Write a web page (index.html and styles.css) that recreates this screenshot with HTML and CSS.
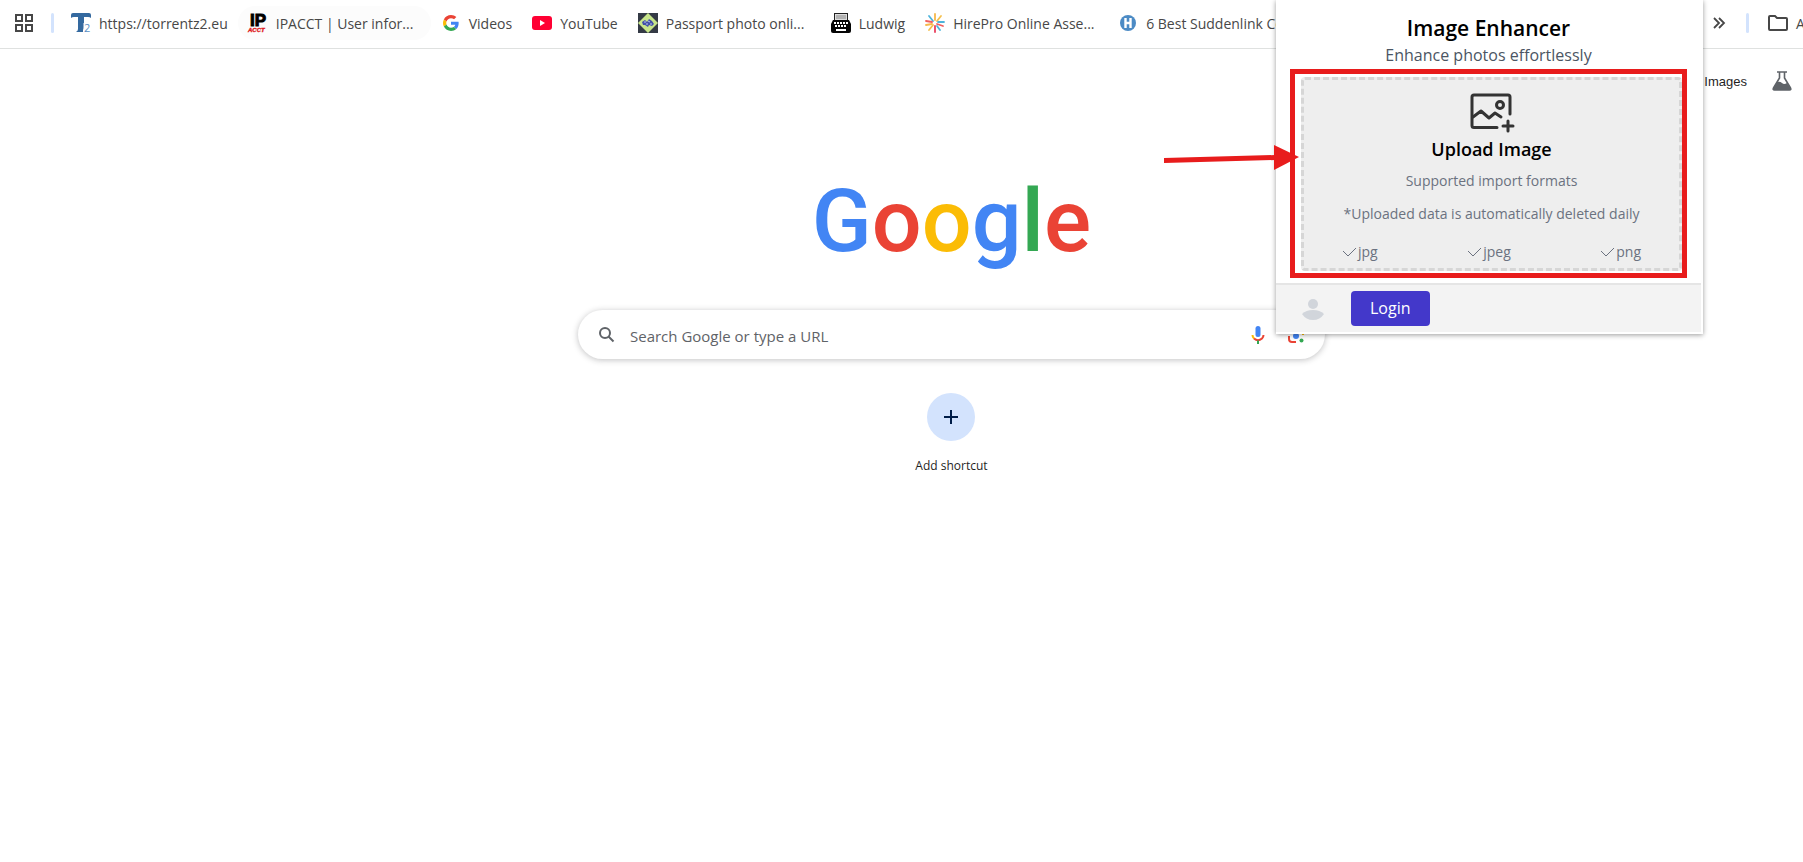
FILE: index.html
```
<!DOCTYPE html>
<html lang="en">
<head>
    <meta charset="UTF-8">
    <meta name="viewport" content="width=device-width, initial-scale=1.0">
    <title>New Tab</title>
    <link rel="stylesheet" href="styles.css">
</head>
<body>
<div class="page">
    <nav class="bookmarks">
        <button class="apps" aria-label="Apps">
            <svg width="18" height="18" viewBox="0 0 18 18" fill="none" stroke="#474747" stroke-width="2">
                <path d="M1 1h6v6H1zM11 1h6v6h-6zM1 11h6v6H1zM11 11h6v6h-6z"/>
            </svg>
        </button>
        <span class="divider"></span>
        <div class="bookmark-list">
            <a class="bookmark" href="#">
                <svg width="20" height="20" viewBox="0 0 20 20">
                    <path d="M0 5V2q0-2 2-2h16q2 0 2 2v3q-1-1-3-1h-4v10q0 2-1 3v2H5q2-1 2-3V4H3Q1 4 0 5z" fill="#34699f"/>
                    <path d="M12.500 10h8v10h-8z" fill="#fff"/>
                    <text x="13" y="19" font-family="Open Sans" font-size="11" fill="#5a8fc4">2</text>
                </svg>
                <span class="title">https://torrentz2.eu</span>
            </a>
            <a class="bookmark hovered" href="#">
                <svg width="20" height="20" viewBox="0 0 20 20">
                    <text x="2" y="13" font-family="Liberation Sans" font-weight="bold" font-size="17" stroke="#000">IP</text>
                    <text x="0" y="19" font-family="Liberation Sans" font-weight="bold" font-style="italic" font-size="6" fill="#e01b22" stroke="#e01b22" stroke-width=".4">ACCT</text>
                </svg>
                <span class="title long">IPACCT | User infor...</span>
            </a>
            <a class="bookmark" href="#">
                <svg width="20" height="20" viewBox="-6 -6 60 60">
                    <path fill="#EA4335" d="M24 9.5c3.54 0 6.71 1.22 9.21 3.6l6.85-6.85C35.9 2.38 30.47 0 24 0 14.62 0 6.51 5.38 2.56 13.22l7.98 6.19C12.43 13.72 17.74 9.5 24 9.5z"/>
                    <path fill="#4285F4" d="M46.98 24.55c0-1.57-.15-3.09-.38-4.55H24v9.02h12.94c-.58 2.96-2.26 5.48-4.78 7.18l7.73 6c4.51-4.18 7.09-10.36 7.09-17.65z"/>
                    <path fill="#FBBC05" d="M10.53 28.59c-.48-1.45-.76-2.99-.76-4.59s.27-3.14.76-4.59l-7.98-6.19C.92 16.46 0 20.12 0 24c0 3.88.92 7.54 2.56 10.78l7.97-6.19z"/>
                    <path fill="#34A853" d="M24 48c6.48 0 11.93-2.13 15.89-5.81l-7.73-6c-2.15 1.45-4.92 2.3-8.16 2.3-6.26 0-11.57-4.22-13.47-9.91l-7.98 6.19C6.51 42.62 14.62 48 24 48z"/>
                </svg>
                <span class="title">Videos</span>
            </a>
            <a class="bookmark" href="#">
                <svg width="20" height="20" viewBox="0 0 20 20">
                    <rect y="3" width="20" height="14" rx="3" fill="#f03"/>
                    <path d="M8 7l5 3-5 3z" fill="#fff"/>
                </svg>
                <span class="title">YouTube</span>
            </a>
            <a class="bookmark" href="#">
                <svg width="20" height="20" viewBox="0 0 20 20">
                    <rect width="20" height="20" fill="#343a45"/>
                    <path d="M10 0l10 10-10 10L0 10z" fill="#c7e58a"/>
                    <path d="M4 9l3-2 2 2 2-3 3 2 2 3-2 2-3-1-1 2-3-2-2 0z" fill="#4350a8"/>
                    <path d="M6 9h2M10 8l2 1M12 11h2M8 11h2" stroke="#b9c5ee"/>
                </svg>
                <span class="title long">Passport photo onli...</span>
            </a>
            <a class="bookmark" href="#">
                <svg width="20" height="20" viewBox="0 0 20 20">
                    <path d="M3 0h14v7H3z" fill="#222"/>
                    <path d="M4 1h12v6H4z" fill="#ddd"/>
                    <path d="M5 3h10M5 5h10" stroke="#888"/>
                    <path d="M2 7h16l2 4v7q0 2-2 2H2q-2 0-2-2v-7z" fill="#050505"/>
                    <path d="M3 10h14M4 13h12" stroke="#fff" stroke-width="2" stroke-dasharray="2 1"/>
                    <path d="M5 17h10" stroke="#fff" stroke-width="2"/>
                </svg>
                <span class="title">Ludwig</span>
            </a>
            <a class="bookmark" href="#">
                <svg width="20" height="20" viewBox="0 0 20 20" stroke-width="1.8" stroke-linecap="round">
                    <path d="M10 7V1M7 11l-6 1" stroke="#f7b84a"/>
                    <path d="M12 8l4-5M8 12l-4 5" stroke="#f5c04e"/>
                    <path d="M13 9l6 0M8 8L4 3" stroke="#4db4dc"/>
                    <path d="M7 9L1 8M12 11l6 2" stroke="#f0605f"/>
                    <path d="M10 13v6" stroke="#e9405f"/>
                    <path d="M12 13l3 4" stroke="#4db4dc"/>
                </svg>
                <span class="title long">HirePro Online Asse...</span>
            </a>
            <a class="bookmark" href="#">
                <svg width="20" height="20" viewBox="0 0 20 20">
                    <circle cx="10" cy="10" r="8" fill="#4c8bc5"/>
                    <path d="M7.500 5v10M12.500 5v10M7 10h6" stroke="#fff" stroke-width="2.4"/>
                </svg>
                <span class="title">6 Best Suddenlink Compatible</span>
            </a>
        </div>
        <div class="bookmark-end">
            <button class="more" aria-label="More bookmarks">
                <svg width="12" height="12" viewBox="0 0 12 12" fill="none" stroke="#474747" stroke-width="1.8">
                    <path d="M1 1l5 5-5 5M6 1l5 5-5 5"/>
                </svg>
            </button>
            <span class="divider"></span>
            <a class="bookmark" href="#">
                <svg width="20" height="16" viewBox="0 0 20 16" fill="none" stroke="#474747" stroke-width="2">
                    <path d="M2 1h5l2 2h9q1 0 1 1v10q0 1-1 1H2q-1 0-1-1V2q0-1 1-1z"/>
                </svg>
                <span class="title">All Bookmarks</span>
            </a>
        </div>
    </nav>

    <header class="top-links">
        <a href="#">Images</a>
        <button aria-label="Search Labs">
            <svg width="20" height="20" viewBox="0 0 20 20">
                <path d="M5 1h10M7.500 1v6L1.500 17q-1 2 1 2h15q2 0 1-2l-6-10V1" fill="none" stroke="#5f6368" stroke-width="1.6"/>
                <path d="M5 11q3-1 5 1t5 0l4 6q0 1-1 1H2q-1 0-1-1z" fill="#5f6368"/>
            </svg>
        </button>
    </header>

    <main>
        <h1 class="logo"><span class="blue">G</span><span class="red">o</span><span class="yellow">o</span><span class="blue">g</span><span class="green">l</span><span class="red">e</span></h1>

        <form class="search">
            <svg width="18" height="18" viewBox="0 0 18 18" fill="none" stroke="#5f6368" stroke-width="2">
                <circle cx="7" cy="7" r="5"/>
                <path d="M10.500 10.500l5 5"/>
            </svg>
            <input type="text" placeholder="Search Google or type a URL" aria-label="Search Google or type a URL">
            <button type="button" aria-label="Voice search">
                <svg width="14" height="20" viewBox="0 0 14 20" fill="none" stroke-width="2">
                    <rect x="4.500" y="1" width="5" height="11" rx="2.500" fill="#4285f4"/>
                    <path d="M1.500 10q0 2 1.500 3.500" stroke="#fbbc04"/>
                    <path d="M3 13.500q4 3.500 8 0 1.500-1.500 1.500-3.500" stroke="#ea4335"/>
                    <path d="M7 15.500V19" stroke="#34a853"/>
                </svg>
            </button>
            <button type="button" aria-label="Search by image">
                <svg width="18" height="18" viewBox="0 0 18 18" fill="none" stroke-width="2">
                    <path d="M2 8V5q0-3 3-3h3" stroke="#4285f4"/>
                    <path d="M10 2h3q3 0 3 3v4" stroke="#fbbc04"/>
                    <path d="M2 10v3q0 3 3 3h4" stroke="#ea4335"/>
                    <circle cx="9" cy="10" r="3" fill="#4285f4"/>
                    <circle cx="14.500" cy="14.500" r="2" fill="#34a853"/>
                </svg>
            </button>
        </form>

        <button class="shortcut">
            <span class="circle">
                <svg width="14" height="14" viewBox="0 0 14 14" stroke="#001d48" stroke-width="2">
                    <path d="M7 0v14M0 7h14"/>
                </svg>
            </span>
            <span>Add shortcut</span>
        </button>
    </main>

    <!-- Extension popup -->
    <section class="popup">
        <h2>Image Enhancer</h2>
        <p class="subtitle">Enhance photos effortlessly</p>
        <div class="highlight">
            <label class="upload">
                <input type="file" accept=".jpg,.jpeg,.png" hidden>
                <svg class="upload-icon" width="44" height="38" viewBox="0 0 44 38" fill="none" stroke="#333" stroke-width="3" stroke-linecap="round" stroke-linejoin="round">
                    <path d="M27 34.500H4q-2 0-2-2V4q0-2 2-2h34q2 0 2 2v17"/>
                    <path d="M3 24l8-6 8 7 6-5 6 4"/>
                    <circle cx="30" cy="12" r="3.500"/>
                    <path d="M38 28v10M33 33h10"/>
                </svg>
                <strong>Upload Image</strong>
                <span class="note">Supported import formats</span>
                <span class="note">*Uploaded data is automatically deleted daily</span>
                <span class="formats">
                    <span><svg width="15" height="10" viewBox="0 0 15 10"><path d="M1 4l5 5 8-8"/></svg>jpg</span>
                    <span><svg width="15" height="10" viewBox="0 0 15 10"><path d="M1 4l5 5 8-8"/></svg>jpeg</span>
                    <span><svg width="15" height="10" viewBox="0 0 15 10"><path d="M1 4l5 5 8-8"/></svg>png</span>
                </span>
            </label>
        </div>
        <footer>
            <svg width="22" height="22" viewBox="0 0 22 22" fill="#d1d5db">
                <circle cx="11" cy="6" r="5"/>
                <path d="M0 16q4-4 11-4t11 4q-4 6-11 6T0 16z"/>
            </svg>
            <button class="login">Login</button>
        </footer>
    </section>

    <svg class="arrow" width="136" height="26" viewBox="0 0 136 26" fill="#e81c1c">
        <path d="M0 13l111-3v5L0 18z"/>
        <path d="M110 0l25 12-25 13z"/>
    </svg>
</div>
</body>
</html>
```
FILE: styles.css
```
body {
    margin: 0;
    overflow: hidden;
    background: #fff;
    font-family: "Open Sans", "Noto Sans", sans-serif;
    font-size: 14px;
    color: #474747;
}
a {
    color: inherit;
    text-decoration: none;
}
button {
    display: flex;
    padding: 0;
    border: none;
    background: none;
    font: inherit;
    color: inherit;
    cursor: pointer;
}
svg {
    flex: none;
    overflow: visible;
}
/* The page is wider than the window, so its right edge is cut off */
.page {
    position: relative;
    margin-right: -100px;
}

/* Bookmarks bar */
.bookmarks {
    display: flex;
    align-items: center;
    height: 46px;
    padding: 0 0 2px 15px;
    border-bottom: 1px solid #dfe1e0;
}
.divider {
    flex: none;
    width: 3px;
    height: 20px;
    border-radius: 2px;
    background: #d3e3fd;
}
.apps {
    margin-right: 18px;
}
.bookmark-list {
    display: flex;
    flex: 1;
    min-width: 0;
    margin-left: 7px;
    overflow: hidden;
}
.bookmark {
    display: flex;
    flex: none;
    align-items: center;
    gap: 8px;
    height: 34px;
    padding: 0 10px;
    border-radius: 17px;
    white-space: nowrap;
}
.bookmark.hovered {
    background: #fcfcfc;
}
.title.long {
    width: 145px;
}
.bookmark-end {
    display: flex;
    flex: none;
    align-items: center;
    width: 190px;
}
.more {
    margin-right: 21px;
}
.bookmark-end .bookmark {
    margin-left: 9px;
}

/* Links under the bar */
.top-links {
    display: flex;
    justify-content: flex-end;
    align-items: center;
    gap: 25px;
    height: 64px;
    padding-right: 111px;
    font-family: "Liberation Sans", Arial, sans-serif;
    font-size: 13px;
    color: #1f1f1f;
}

/* Logo and search */
main {
    display: flex;
    flex-direction: column;
    align-items: center;
}
.logo {
    margin: 52px 0 33px;
    font-family: Roboto, sans-serif;
    font-size: 88px;
    font-weight: 500;
    line-height: 112px;
}
.blue {
    color: #4285f4;
}
.red {
    color: #ea4335;
}
.yellow {
    color: #fbbc05;
}
.green {
    color: #34a853;
}
.search {
    display: flex;
    align-items: center;
    box-sizing: border-box;
    width: 747px;
    height: 49px;
    padding: 0 20px;
    border-radius: 25px;
    box-shadow: 0 1px 6px rgba(32, 33, 36, 0.28);
}
.search input {
    flex: 1;
    margin-left: 14px;
    padding: 2px 0 0;
    border: none;
    outline: none;
    background: none;
    font: inherit;
    font-size: 15px;
}
.search input::placeholder {
    color: #5f6368;
}
.search button + button {
    margin-left: 22px;
}
.shortcut {
    flex-direction: column;
    align-items: center;
    gap: 16px;
    margin-top: 34px;
    font-size: 12px;
    line-height: 18px;
    color: #1f1f1f;
}
.circle {
    display: flex;
    align-items: center;
    justify-content: center;
    width: 48px;
    height: 48px;
    border-radius: 50%;
    background: #d3e3fd;
}

/* Extension popup */
.popup {
    position: absolute;
    top: 0;
    right: 200px;
    box-sizing: border-box;
    width: 427px;
    padding: 13px 2px 2px 0;
    background: #fff;
    box-shadow: 0 1px 5px rgba(0, 0, 0, 0.4);
    text-align: center;
}
.popup h2 {
    margin: 0;
    font-size: 21px;
    font-weight: 600;
    line-height: 30px;
    color: #000;
}
.subtitle {
    margin: 0 0 2px;
    font-size: 16px;
    line-height: 24px;
    color: #4b5563;
}
.highlight {
    margin: 0 14px 5px 14px;
    padding: 3px 0 2px 6px;
    border: 5px solid #e81c1c;
}
.upload {
    display: flex;
    flex-direction: column;
    align-items: center;
    padding: 13px 38px 4px;
    border: 3px dashed #d6d6d6;
    border-radius: 4px;
    background: #eee;
    line-height: 24px;
    color: #6b7280;
    cursor: pointer;
}
.upload strong {
    margin: 6px 0 4px;
    font-size: 18px;
    font-weight: 600;
    color: #000;
}
.note {
    margin: 4px 0 5px;
    white-space: nowrap;
}
.formats {
    display: flex;
    align-self: stretch;
    justify-content: space-between;
    margin-top: 9px;
}
.formats svg {
    margin-right: 1px;
    fill: none;
    stroke: #6b7280;
}
.popup footer {
    display: flex;
    align-items: center;
    gap: 27px;
    padding: 6px 26px;
    border-top: 2px solid #e5e5e5;
    background: #f3f3f3;
}
.login {
    padding: 0 19px;
    border-radius: 4px;
    background: #4338ca;
    font-size: 16px;
    line-height: 35px;
    color: #fff;
}
.arrow {
    position: absolute;
    top: 145px;
    right: 603px;
}
```
